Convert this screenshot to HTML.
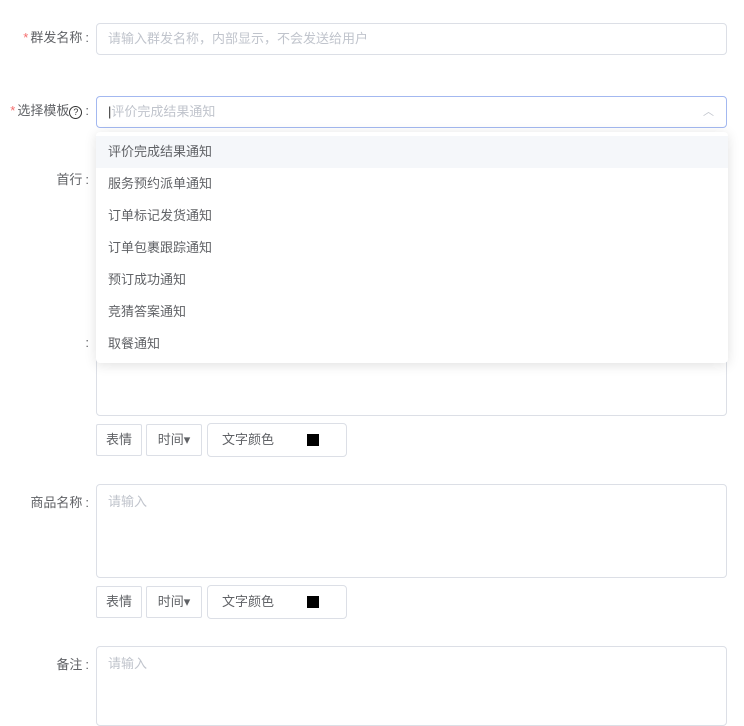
<html><head><style>
body{margin:0;width:744px;height:711px;overflow:hidden;background:#fff;font-family:"Liberation Sans","Noto Sans CJK SC",sans-serif;font-size:13px;color:#606266;position:relative}
.a{position:absolute}
.lab{position:absolute;right:655px;text-align:right;color:#606266;white-space:nowrap;line-height:16px}
.r{color:#f56c6c;margin-right:2px}
.c{margin-left:3px}
.box{position:absolute;left:96px;width:629px;border:1px solid #dcdfe6;border-radius:4px;background:#fff}
.ph{color:#c0c4cc}
.btn{position:absolute;height:32px;border:1px solid #dcdfe6;border-radius:2px;line-height:30px;color:#606266;box-sizing:border-box;text-align:center}
.dd{position:absolute;left:96px;top:132px;width:632px;height:231px;background:#fff;box-shadow:0 2px 12px rgba(0,0,0,.12);border-radius:4px}
.it{height:32px;line-height:32px;padding-left:12px;color:#606266}
.q{display:inline-block;width:11px;height:11px;border:1.3px solid #333;border-radius:50%;font-size:9px;line-height:11px;text-align:center;vertical-align:0px;color:#333}
</style></head><body>
<div class="lab" style="top:30px"><span class="r">*</span>群发名称<span class="c">:</span></div>
<div class="box" style="top:23px;height:30px;line-height:30px;padding-left:11px;width:618px"><span class="ph">请输入群发名称，内部显示，不会发送给用户</span></div>
<div class="lab" style="top:103px"><span class="r">*</span>选择模板<span class="q">?</span><span class="c">:</span></div>
<div class="box" style="top:96px;height:30px;line-height:30px;padding-left:11px;width:618px;border-color:#a3b8f0"><span style="color:#333">|</span><span class="ph">评价完成结果通知</span><span class="a" style="right:12px;top:0;color:#c0c4cc;font-size:11px">︿</span></div>
<div class="lab" style="top:172px">首行<span class="c">:</span></div>
<div class="lab" style="top:335px">:</div>
<div class="box" style="top:330px;height:84px"></div>
<div class="btn" style="left:96px;top:424px;width:46px">表情</div>
<div class="btn" style="left:146px;top:424px;width:56px">时间▾</div>
<div class="btn" style="left:207px;top:423px;width:140px;height:34px;line-height:32px;border-radius:4px;text-align:left;padding-left:14px">文字颜色<span class="a" style="left:99px;top:10px;width:12px;height:12px;background:#000"></span></div>
<div class="lab" style="top:495px">商品名称<span class="c">:</span></div>
<div class="box" style="top:484px;height:94px;padding:6px 11px;box-sizing:border-box;width:631px"><span class="ph">请输入</span></div>
<div class="btn" style="left:96px;top:586px;width:46px">表情</div>
<div class="btn" style="left:146px;top:586px;width:56px">时间▾</div>
<div class="btn" style="left:207px;top:585px;width:140px;height:34px;line-height:32px;border-radius:4px;text-align:left;padding-left:14px">文字颜色<span class="a" style="left:99px;top:10px;width:12px;height:12px;background:#000"></span></div>
<div class="lab" style="top:657px">备注<span class="c">:</span></div>
<div class="box" style="top:646px;height:80px;padding:6px 11px;box-sizing:border-box;width:631px"><span class="ph">请输入</span></div>
<div class="dd"><div style="height:4px"></div>
<div class="it" style="background:#f5f7fa">评价完成结果通知</div>
<div class="it">服务预约派单通知</div>
<div class="it">订单标记发货通知</div>
<div class="it">订单包裹跟踪通知</div>
<div class="it">预订成功通知</div>
<div class="it">竞猜答案通知</div>
<div class="it">取餐通知</div>
</div>
</body></html>
